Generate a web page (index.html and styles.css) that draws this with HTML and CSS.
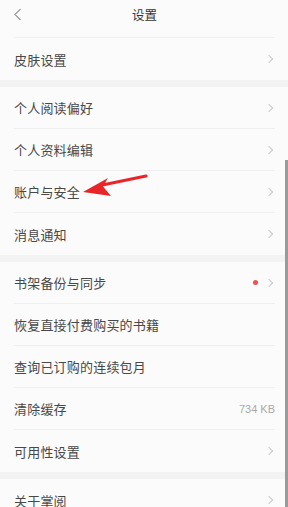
FILE: index.html
```
<!DOCTYPE html>
<html lang="zh">
<head>
<meta charset="utf-8">
<link rel="stylesheet" href="styles.css">
</head>
<body>
<div class="page">
  <header class="header">
    <svg class="back" width="8" height="13" viewBox="0 0 8 13"><path d="M6.5 1 L1 6.5 L6.5 12" fill="none" stroke="#555" stroke-width="1"/></svg>
    <span class="title">设置</span>
  </header>
  <section class="group">
    <div class="row"><span class="label">皮肤设置</span><span class="chev"></span></div>
  </section>
  <section class="group">
    <div class="row"><span class="label">个人阅读偏好</span><span class="chev"></span></div>
    <div class="row"><span class="label">个人资料编辑</span><span class="chev"></span></div>
    <div class="row"><span class="label">账户与安全</span><span class="chev"></span></div>
    <div class="row"><span class="label">消息通知</span><span class="chev"></span></div>
  </section>
  <section class="group">
    <div class="row"><span class="label">书架备份与同步</span><span class="dot"></span><span class="chev"></span></div>
    <div class="row"><span class="label">恢复直接付费购买的书籍</span></div>
    <div class="row"><span class="label">查询已订购的连续包月</span></div>
    <div class="row"><span class="label">清除缓存</span><span class="value">734 KB</span></div>
    <div class="row"><span class="label">可用性设置</span><span class="chev"></span></div>
  </section>
  <section class="group">
    <div class="row"><span class="label">关于掌阅</span><span class="chev"></span></div>
  </section>
  <div class="scrollbar"></div>
  <svg class="arrow" width="80" height="30" viewBox="0 0 80 30">
    <path d="M66 3 L20 12.5" stroke="#e8262a" stroke-width="3.2" stroke-linecap="round" fill="none"/>
    <path d="M3 19 L28 5 L23 13.5 L31 23 Z" fill="#e8262a"/>
  </svg>
</div>
</body>
</html>
```
FILE: styles.css
```
* { box-sizing: border-box; }
html, body { margin: 0; padding: 0; }
body {
  background: #fbfbfb;
  font-family: "Noto Sans CJK SC", "Noto Sans", sans-serif;
  color: #484848;
}
.page {
  position: relative;
  width: 288px;
  height: 507px;
  overflow: hidden;
}
.header {
  position: relative;
  height: 38px;
  margin: 0 13px 0 14px;
  border-bottom: 1px solid #f0f0f0;
  display: flex;
  align-items: center;
  justify-content: center;
}
.back {
  position: absolute;
  left: 0;
  top: 8px;
}
.title {
  font-size: 12.5px;
  color: #333;
  margin-top: -8px;
}
.group {
  background: #fbfbfb;
  padding: 0 13px 0 14px;
}
.group + .group {
  border-top: 7px solid #f3f3f3;
}
.row {
  height: 42px;
  display: flex;
  align-items: center;
  border-bottom: 1px solid #efefef;
}
.group .row:last-child { border-bottom: none; }
.label {
  flex: 1;
  font-size: 13px;
  letter-spacing: 0.2px;
  color: #484848;
}
.chev {
  width: 6px;
  height: 6px;
  border-top: 1px solid #c8c8c8;
  border-right: 1px solid #c8c8c8;
  transform: rotate(45deg);
  margin-right: 3px;
}
.dot {
  width: 5px;
  height: 5px;
  border-radius: 50%;
  background: #e9554d;
  margin-right: 8px;
}
.value {
  font-size: 11px;
  color: #aaa;
  font-family: "Liberation Sans", "Noto Sans", sans-serif;
}
.scrollbar {
  position: absolute;
  right: 0;
  top: 160px;
  width: 3px;
  height: 347px;
  background: #9a9a9a;
}
.arrow {
  position: absolute;
  left: 80px;
  top: 173px;
}
```
